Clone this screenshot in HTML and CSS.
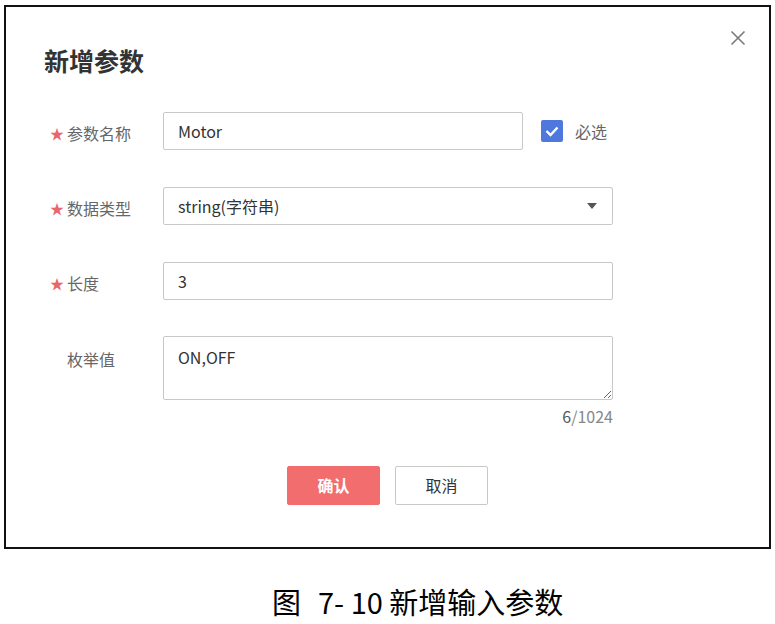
FILE: index.html
```html
<!DOCTYPE html>
<html lang="zh">
<head>
    <meta charset="UTF-8">
    <title>新增参数</title>
    <link rel="stylesheet" href="styles.css">
</head>
<body>
<div class="dialog">
    <a href="javascript:;" class="close">
        <svg width="16" height="16" viewBox="0 0 16 16"><path d="M1.5 1.5 L14.5 14.5 M14.5 1.5 L1.5 14.5" stroke="#7a7a7a" stroke-width="1.6" fill="none"/></svg>
    </a>
    <h2 class="title">新增参数</h2>
    <div class="form">
        <div class="row">
            <label class="label"><span class="star">★</span>参数名称</label>
            <input class="field short" type="text" value="Motor">
            <span class="check">
                <svg width="22" height="22" viewBox="0 0 22 22"><rect width="22" height="22" rx="2" fill="#4f78de"/><path d="M5.5 11 L9.5 15 L16.5 7.5" stroke="#fff" stroke-width="2.4" fill="none"/></svg>
            </span>
            <span class="check-text">必选</span>
        </div>
        <div class="row">
            <label class="label"><span class="star">★</span>数据类型</label>
            <div class="field select">
                <span>string(字符串)</span>
                <svg width="10" height="6" viewBox="0 0 10 6"><path d="M0 0 L10 0 L5 6 Z" fill="#555"/></svg>
            </div>
        </div>
        <div class="row">
            <label class="label"><span class="star">★</span>长度</label>
            <input class="field" type="text" value="3">
        </div>
        <div class="row top">
            <label class="label"><span class="star"></span>枚举值</label>
            <textarea class="field area">ON,OFF</textarea>
        </div>
        <div class="count"><b>6</b>/1024</div>
    </div>
    <div class="btns">
        <a href="javascript:;" class="btn ok">确认</a>
        <a href="javascript:;" class="btn cancel">取消</a>
    </div>
</div>
<p class="caption"><span class="fig">图</span>7- 10 新增输入参数</p>
</body>
</html>
```

FILE: styles.css
```css
* {
    margin: 0;
    padding: 0;
    box-sizing: border-box;
}

body {
    background: #fff;
    font-family: "Noto Sans CJK SC", "Noto Sans", sans-serif;
    color: #333;
}

.dialog {
    position: relative;
    width: 767px;
    height: 544px;
    margin: 5px 0 0 4px;
    border: 2px solid #111;
    padding-top: 37px;
}

.close {
    position: absolute;
    top: 23px;
    right: 23px;
    display: block;
    width: 16px;
    height: 16px;
}

.close svg {
    display: block;
}

.title {
    padding-left: 38px;
    font-size: 25px;
    line-height: 32px;
    font-weight: bold;
    color: #333;
}

.form {
    margin-top: 36px;
    padding-left: 44px;
}

.row {
    display: flex;
    align-items: center;
    height: 38px;
    margin-bottom: 37px;
}

.row:nth-child(3) {
    margin-bottom: 36px;
}

.row.top {
    align-items: flex-start;
    height: 64px;
    margin-bottom: 0;
}

.row.top .label {
    line-height: 40px;
}

.label {
    display: flex;
    align-items: center;
    width: 113px;
    padding-top: 3px;
    font-size: 16px;
    color: #666;
}

.star {
    display: inline-block;
    width: 17px;
    font-size: 14px;
    color: #e8676b;
}

.field {
    width: 450px;
    height: 38px;
    border: 1px solid #c8c8c8;
    border-radius: 2px;
    padding: 0 14px;
    font-family: "Noto Sans CJK SC", "Noto Sans", sans-serif;
    font-size: 16px;
    color: #333;
    background: #fff;
    outline: none;
}

.field.short {
    width: 360px;
}

.select {
    display: flex;
    align-items: center;
    justify-content: space-between;
    padding-right: 15px;
}

.area {
    height: 64px;
    padding-top: 9px;
    line-height: 22px;
    resize: vertical;
}

.check {
    display: block;
    width: 22px;
    height: 22px;
    margin: 0 12px 0 18px;
}

.check svg {
    display: block;
}

.check-text {
    font-size: 16px;
    color: #666;
}

.count {
    width: 563px;
    margin-top: 7px;
    text-align: right;
    font-size: 16px;
    line-height: 18px;
    color: #888;
}

.count b {
    font-weight: normal;
    color: #555;
}

.btns {
    display: flex;
    justify-content: center;
    gap: 15px;
    margin-top: 41px;
}

.btn {
    display: block;
    width: 93px;
    height: 39px;
    line-height: 37px;
    text-align: center;
    font-size: 16px;
    text-decoration: none;
    border-radius: 2px;
}

.btn.ok {
    background: #f26d6d;
    border: 1px solid #f26d6d;
    color: #fff;
    font-weight: bold;
}

.btn.cancel {
    background: #fff;
    border: 1px solid #c8c8c8;
    color: #333;
}

.caption {
    margin-top: 33px;
    padding-left: 272px;
    font-size: 29px;
    line-height: 38px;
    color: #000;
}

.fig {
    margin-right: 17px;
}
```
